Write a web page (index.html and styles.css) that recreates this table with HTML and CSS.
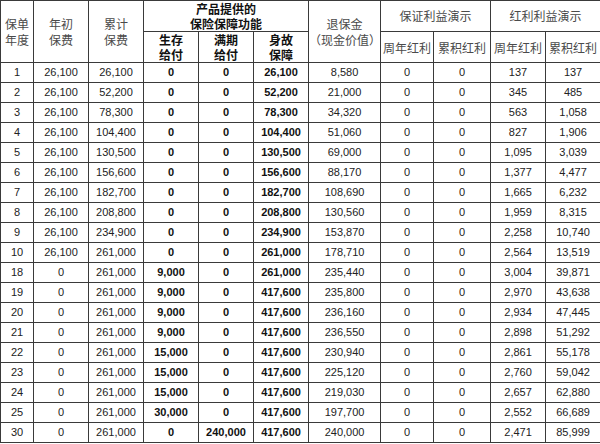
FILE: index.html
```html
<!DOCTYPE html>
<html lang="zh">
<head>
<meta charset="utf-8">
<link rel="stylesheet" href="styles.css">
</head>
<body>
<table class="plan">
  <colgroup>
    <col class="c-year"><col class="c55"><col class="c55"><col class="c55"><col class="c55"><col class="c55"><col class="c72"><col class="c53"><col class="c57"><col class="c55"><col class="c55">
  </colgroup>
  <thead>
    <tr class="h1">
      <th rowspan="2">保单<br>年度</th>
      <th rowspan="2">年初<br>保费</th>
      <th rowspan="2">累计<br>保费</th>
      <th colspan="3" class="bold top">产品提供的<br>保险保障功能</th>
      <th rowspan="2">退保金<br><span class="paren">（现金价值）</span></th>
      <th colspan="2">保证利益演示</th>
      <th colspan="2">红利利益演示</th>
    </tr>
    <tr class="h2">
      <th class="bold">生存<br>给付</th>
      <th class="bold">满期<br>给付</th>
      <th class="bold">身故<br>保障</th>
      <th>周年红利</th>
      <th>累积红利</th>
      <th>周年红利</th>
      <th>累积红利</th>
    </tr>
  </thead>
  <tbody>
    <tr><td>1</td><td>26,100</td><td>26,100</td><td class="b">0</td><td class="b">0</td><td class="b">26,100</td><td>8,580</td><td>0</td><td>0</td><td>137</td><td>137</td></tr>
    <tr><td>2</td><td>26,100</td><td>52,200</td><td class="b">0</td><td class="b">0</td><td class="b">52,200</td><td>21,000</td><td>0</td><td>0</td><td>345</td><td>485</td></tr>
    <tr><td>3</td><td>26,100</td><td>78,300</td><td class="b">0</td><td class="b">0</td><td class="b">78,300</td><td>34,320</td><td>0</td><td>0</td><td>563</td><td>1,058</td></tr>
    <tr><td>4</td><td>26,100</td><td>104,400</td><td class="b">0</td><td class="b">0</td><td class="b">104,400</td><td>51,060</td><td>0</td><td>0</td><td>827</td><td>1,906</td></tr>
    <tr><td>5</td><td>26,100</td><td>130,500</td><td class="b">0</td><td class="b">0</td><td class="b">130,500</td><td>69,000</td><td>0</td><td>0</td><td>1,095</td><td>3,039</td></tr>
    <tr><td>6</td><td>26,100</td><td>156,600</td><td class="b">0</td><td class="b">0</td><td class="b">156,600</td><td>88,170</td><td>0</td><td>0</td><td>1,377</td><td>4,477</td></tr>
    <tr><td>7</td><td>26,100</td><td>182,700</td><td class="b">0</td><td class="b">0</td><td class="b">182,700</td><td>108,690</td><td>0</td><td>0</td><td>1,665</td><td>6,232</td></tr>
    <tr><td>8</td><td>26,100</td><td>208,800</td><td class="b">0</td><td class="b">0</td><td class="b">208,800</td><td>130,560</td><td>0</td><td>0</td><td>1,959</td><td>8,315</td></tr>
    <tr><td>9</td><td>26,100</td><td>234,900</td><td class="b">0</td><td class="b">0</td><td class="b">234,900</td><td>153,870</td><td>0</td><td>0</td><td>2,258</td><td>10,740</td></tr>
    <tr><td>10</td><td>26,100</td><td>261,000</td><td class="b">0</td><td class="b">0</td><td class="b">261,000</td><td>178,710</td><td>0</td><td>0</td><td>2,564</td><td>13,519</td></tr>
    <tr><td>18</td><td>0</td><td>261,000</td><td class="b">9,000</td><td class="b">0</td><td class="b">261,000</td><td>235,440</td><td>0</td><td>0</td><td>3,004</td><td>39,871</td></tr>
    <tr><td>19</td><td>0</td><td>261,000</td><td class="b">9,000</td><td class="b">0</td><td class="b">417,600</td><td>235,800</td><td>0</td><td>0</td><td>2,970</td><td>43,638</td></tr>
    <tr><td>20</td><td>0</td><td>261,000</td><td class="b">9,000</td><td class="b">0</td><td class="b">417,600</td><td>236,160</td><td>0</td><td>0</td><td>2,934</td><td>47,445</td></tr>
    <tr><td>21</td><td>0</td><td>261,000</td><td class="b">9,000</td><td class="b">0</td><td class="b">417,600</td><td>236,550</td><td>0</td><td>0</td><td>2,898</td><td>51,292</td></tr>
    <tr><td>22</td><td>0</td><td>261,000</td><td class="b">15,000</td><td class="b">0</td><td class="b">417,600</td><td>230,940</td><td>0</td><td>0</td><td>2,861</td><td>55,178</td></tr>
    <tr><td>23</td><td>0</td><td>261,000</td><td class="b">15,000</td><td class="b">0</td><td class="b">417,600</td><td>225,120</td><td>0</td><td>0</td><td>2,760</td><td>59,042</td></tr>
    <tr><td>24</td><td>0</td><td>261,000</td><td class="b">15,000</td><td class="b">0</td><td class="b">417,600</td><td>219,030</td><td>0</td><td>0</td><td>2,657</td><td>62,880</td></tr>
    <tr><td>25</td><td>0</td><td>261,000</td><td class="b">30,000</td><td class="b">0</td><td class="b">417,600</td><td>197,700</td><td>0</td><td>0</td><td>2,552</td><td>66,689</td></tr>
    <tr><td>30</td><td>0</td><td>261,000</td><td class="b">0</td><td class="b">240,000</td><td class="b">417,600</td><td>240,000</td><td>0</td><td>0</td><td>2,471</td><td>85,999</td></tr>
  </tbody>
</table>
</body>
</html>
```
FILE: styles.css
```css
html, body {
  margin: 0;
  padding: 0;
  background: #fff;
}
.plan {
  width: 600px;
  table-layout: fixed;
  border-collapse: collapse;
  font-family: "Liberation Sans", Arial, "Noto Sans CJK SC", sans-serif;
  font-size: 11px;
  color: #222;
}
.c-year { width: 33px; }
.c55 { width: 55px; }
.c72 { width: 72px; }
.c53 { width: 53px; }
.c57 { width: 57px; }
.plan th, .plan td {
  border: 1px solid #3a3a3a;
  text-align: center;
  vertical-align: middle;
  padding: 0;
  overflow: hidden;
  white-space: nowrap;
}
.plan th {
  font-family: "Noto Sans CJK SC", sans-serif;
  font-weight: normal;
  font-size: 12px;
  line-height: 16px;
  color: #4a4a4a;
}
.plan th.bold {
  font-weight: bold;
  color: #111;
}
.h1 th { height: 30px; }
.h2 th { height: 30px; line-height: 15px; }
.plan th.top {
  line-height: 15px;
}
.plan td {
  height: 19px;
  line-height: 19px;
}
.plan td.b {
  font-weight: bold;
  color: #111;
}
```
